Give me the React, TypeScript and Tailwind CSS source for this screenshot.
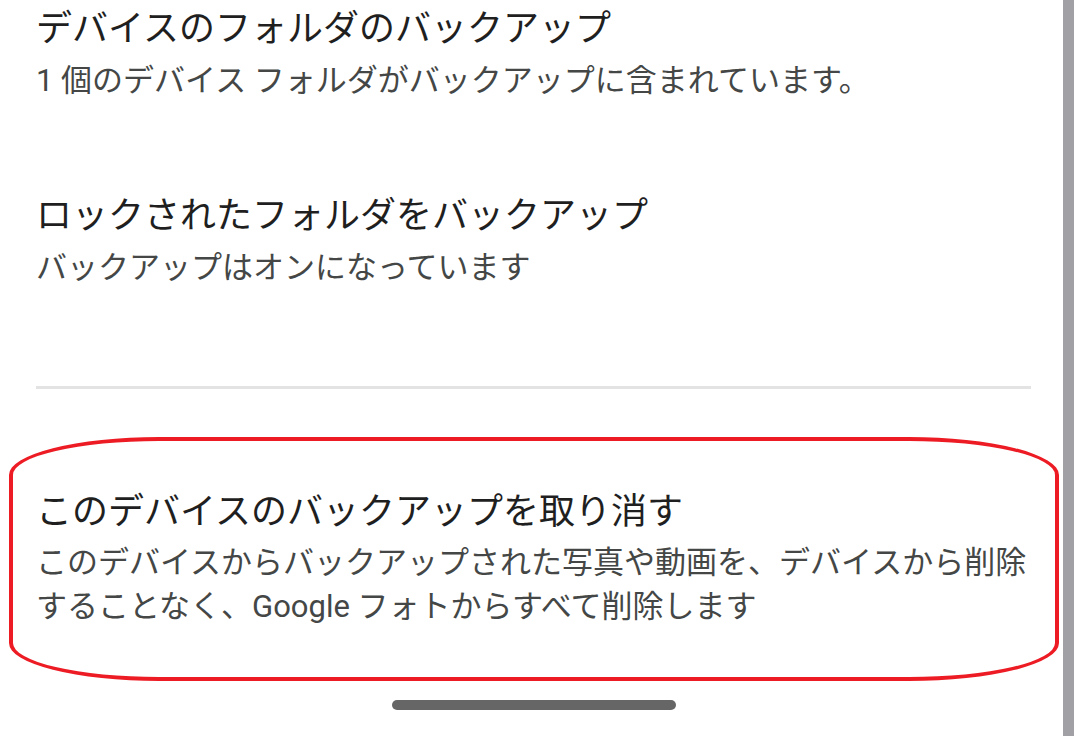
import React from "react"

interface SettingItemProps {
  title: string
  summary: React.ReactNode
}

function SettingItem({ title, summary }: SettingItemProps) {
  return (
    <div>
      <h2 className="text-[36px] leading-[48px] text-[#1f1f1f] font-normal">{title}</h2>
      <p className="mt-[6px] text-[31px] leading-[44px] text-[#444746]">{summary}</p>
    </div>
  )
}

export default function App() {
  return (
    <div
      className="flex w-[1074px] h-[736px] bg-white overflow-hidden"
      style={{ fontFamily: '"Roboto", "Noto Sans CJK JP", sans-serif' }}
    >
      <main className="flex-1 pl-[36px] pr-[32px]">
        <div className="pt-[5px]">
          <SettingItem
            title="デバイスのフォルダのバックアップ"
            summary="1 個のデバイス フォルダがバックアップに含まれています。"
          />
        </div>

        <div className="mt-[89px]">
          <SettingItem title="ロックされたフォルダをバックアップ" summary="バックアップはオンになっています" />
        </div>

        <hr className="mt-[96px] h-[3px] border-0 bg-[#e3e3e3]" />

        <div className="relative mt-[99px]">
          {/* red hand-drawn annotation around the item */}
          <div className="absolute left-[-27px] top-[-51px] w-[1050px] h-[244px] border-4 border-[#ed1c24] rounded-[150px/38px] pointer-events-none" />
          <h2 className="text-[36px] leading-[48px] text-[#1f1f1f] font-normal">このデバイスのバックアップを取り消す</h2>
          <p className="mt-[5px] text-[31px] leading-[44px] text-[#444746]">
            このデバイスからバックアップされた写真や動画を、デバイスから削除
            <br />
            することなく、Google フォトからすべて削除します
          </p>
        </div>

        <div className="mt-[71px] ml-[356px] w-[284px] h-[10px] rounded-full bg-[#666666]" />
      </main>

      <div className="w-[11px] h-full bg-[#a1a1a5]" />
    </div>
  )
}
